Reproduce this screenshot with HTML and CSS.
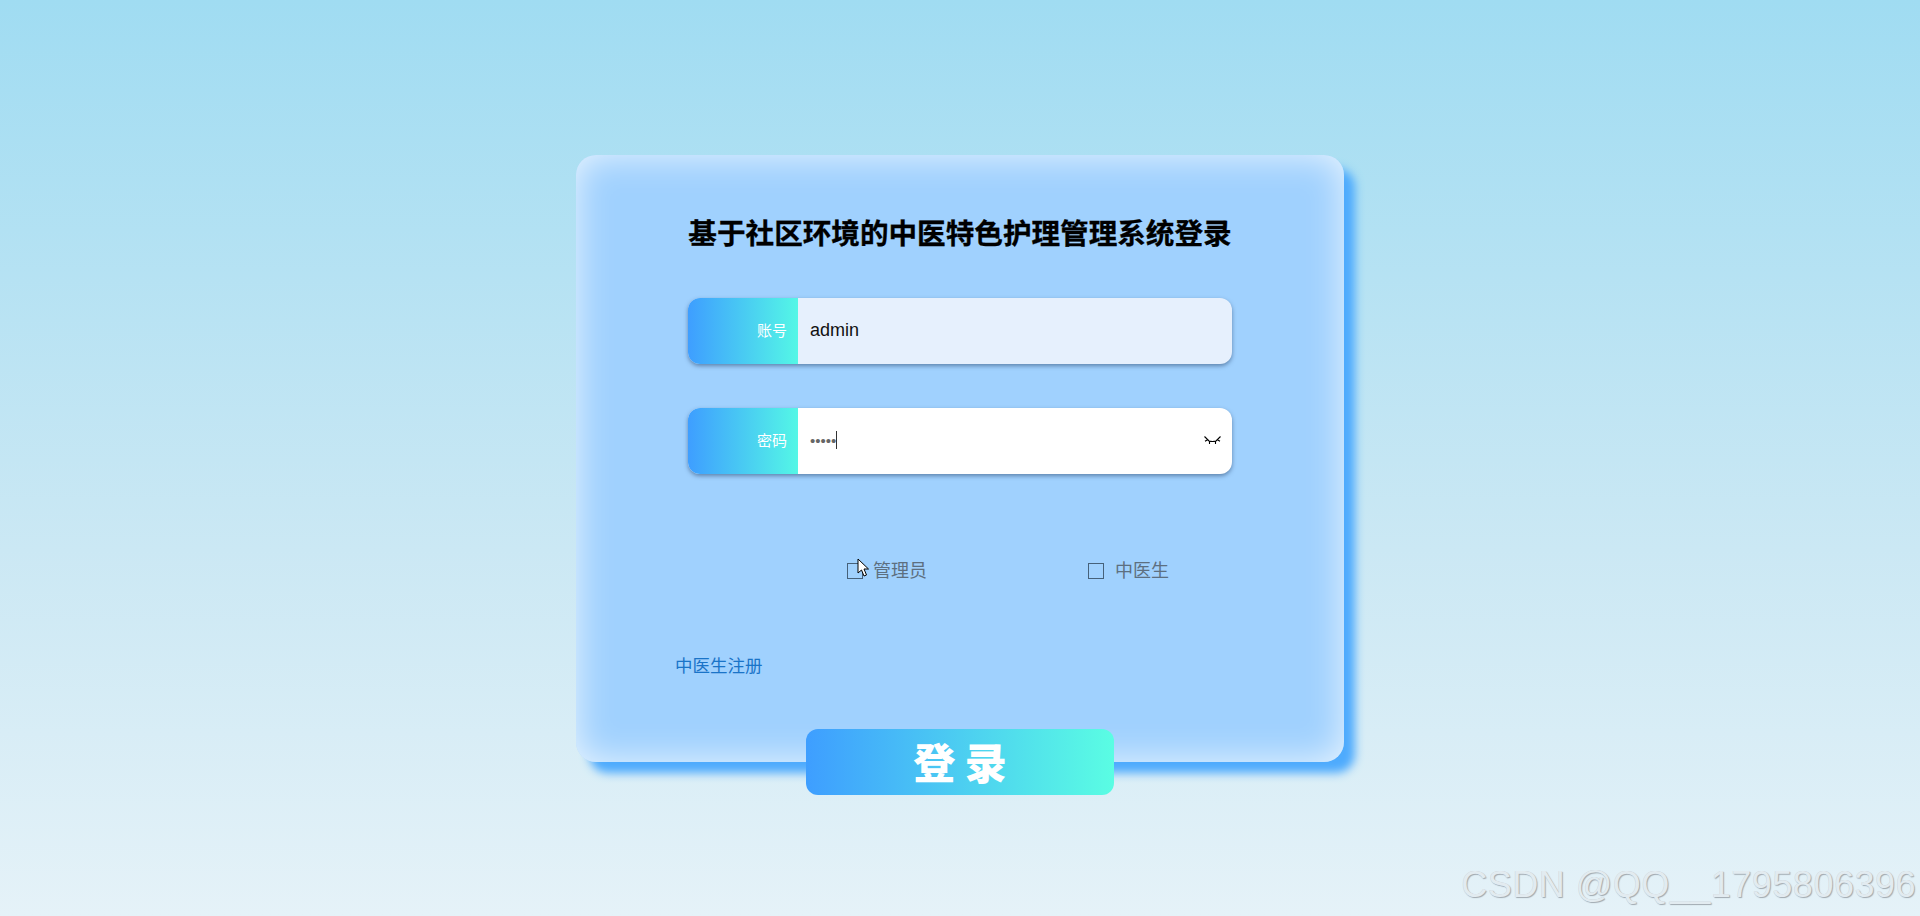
FILE: index.html
```html
<!DOCTYPE html>
<html lang="zh-CN">
<head>
<meta charset="utf-8">
<title>登录</title>
<link rel="stylesheet" href="styles.css">
</head>
<body>
<main class="stage">
  <form class="card">
    <h1 class="title">基于社区环境的中医特色护理管理系统登录</h1>
    <div class="field readonly">
      <span class="label">账号</span>
      <span class="value">admin</span>
    </div>
    <div class="field">
      <span class="label">密码</span>
      <span class="value dots">•••••<i class="caret"></i></span>
      <svg class="eye" viewBox="0 0 19 10" width="19" height="10" fill="none" stroke="#000" stroke-width="1.1"><path d="M1.500 1.500L6 6Q9.500 7 13 6L17.500 1.500"/><path d="M2 6.300L5 4.500M6.500 6V9M12.500 6V9M14 4.500L17 6.300"/></svg>
    </div>
    <div class="roles">
      <label class="role"><span class="box"></span><span class="role-text first">管理员</span>
        <svg class="cursor" viewBox="0 0 13 20" width="13" height="20"><path d="M1 1V15L4.500 12L7 18L9.500 17L7 11H11.500Z" fill="#fff" stroke="#000" stroke-width="1"/></svg>
      </label>
      <label class="role"><span class="box"></span><span class="role-text">中医生</span></label>
    </div>
    <a class="register">中医生注册</a>
    <button class="submit" type="button">登 录</button>
  </form>
  <div class="watermark">CSDN @QQ__1795806396</div>
</main>
</body>
</html>
```
FILE: styles.css
```css
* { box-sizing: border-box; }
html, body { margin: 0; height: 100%; overflow: hidden; }
body {
  font-family: "Liberation Sans", "Noto Sans CJK SC", sans-serif;
  background: linear-gradient(180deg, #a0dcf2 0%, #cbe8f4 60%, #e5f2f8 100%);
}
.stage {
  position: relative;
  height: 916px;
  padding-top: 155px;
  display: flex;
  justify-content: center;
  align-items: flex-start;
}
.card {
  position: relative;
  width: 768px;
  height: 607px;
  padding: 0 112px;
  border-radius: 20px;
  background: #a0d1fe;
  box-shadow: inset 0 0 36px rgba(255, 255, 255, 0.8), 12px 12px 10px -1px #4eabfd;
  display: flex;
  flex-direction: column;
}
.title {
  margin: 0;
  padding-top: 57px;
  height: 143px;
  font-size: 28.600px;
  line-height: 40px;
  font-weight: 700;
  color: #000;
  text-align: center;
  white-space: nowrap;
  font-family: "Noto Sans CJK SC", sans-serif;
  -webkit-text-stroke: 0.3px #000;
}
.field {
  position: relative;
  display: flex;
  align-items: center;
  height: 66px;
  margin-bottom: 44px;
  border-radius: 12px;
  background: #fff;
  box-shadow: 0 2px 4px rgba(40, 70, 110, 0.55);
  overflow: hidden;
}
.field.readonly { background: #e6f0fd; }
.label {
  flex: 0 0 110px;
  height: 100%;
  padding: 0 11px 3px 0;
  display: flex;
  align-items: center;
  justify-content: flex-end;
  color: #fff;
  font-size: 15px;
  font-family: "Noto Sans CJK SC", sans-serif;
  background: linear-gradient(90deg, #3e9eff, #54f7e6);
}
.value {
  padding: 0 0 2px 12px;
  font-size: 18px;
  color: #111;
}
.dots {
  font-size: 15px;
  color: #666;
  display: flex;
  align-items: center;
}
.caret {
  display: block;
  width: 1px;
  height: 18px;
  background: #333;
}
.eye { position: absolute; right: 10px; top: 27px; }
.roles {
  display: flex;
  padding-left: 159px;
  margin-top: 33px;
  height: 36px;
  align-items: center;
}
.role {
  position: relative;
  display: flex;
  align-items: center;
  width: 241px;
  flex: 0 0 241px;
  color: #5d6f80;
  font-size: 18px;
  font-family: "Noto Sans CJK SC", sans-serif;
}
.box {
  width: 16px;
  height: 16px;
  margin-top: 4px;
  border: 1px solid #46617a;
}
.role-text { margin-left: 11px; }
.role-text.first { margin-left: 10px; }
.cursor { position: absolute; left: 10px; top: 2px; }
.register {
  margin: 65px 0 0 -13px;
  font-size: 17.500px;
  line-height: 26px;
  color: #1a74c8;
  font-family: "Noto Sans CJK SC", sans-serif;
}
.submit {
  position: absolute;
  left: 230px;
  top: 574px;
  width: 308px;
  height: 66px;
  padding: 0 0 4px;
  border: 0;
  border-radius: 12px;
  color: #fff;
  font-size: 42px;
  font-weight: 900;
  font-family: "Noto Sans CJK SC", sans-serif;
  background: linear-gradient(90deg, #3e9eff, #5afde3);
}
.watermark {
  position: absolute;
  right: 4px;
  bottom: 11px;
  font-size: 36px;
  line-height: 40px;
  letter-spacing: 0.5px;
  color: #e2ebf0;
  text-shadow: 1px 1px 1px #a0a9b0, 0 -0.5px 0 #bcc5cb;
  white-space: nowrap;
}
```
